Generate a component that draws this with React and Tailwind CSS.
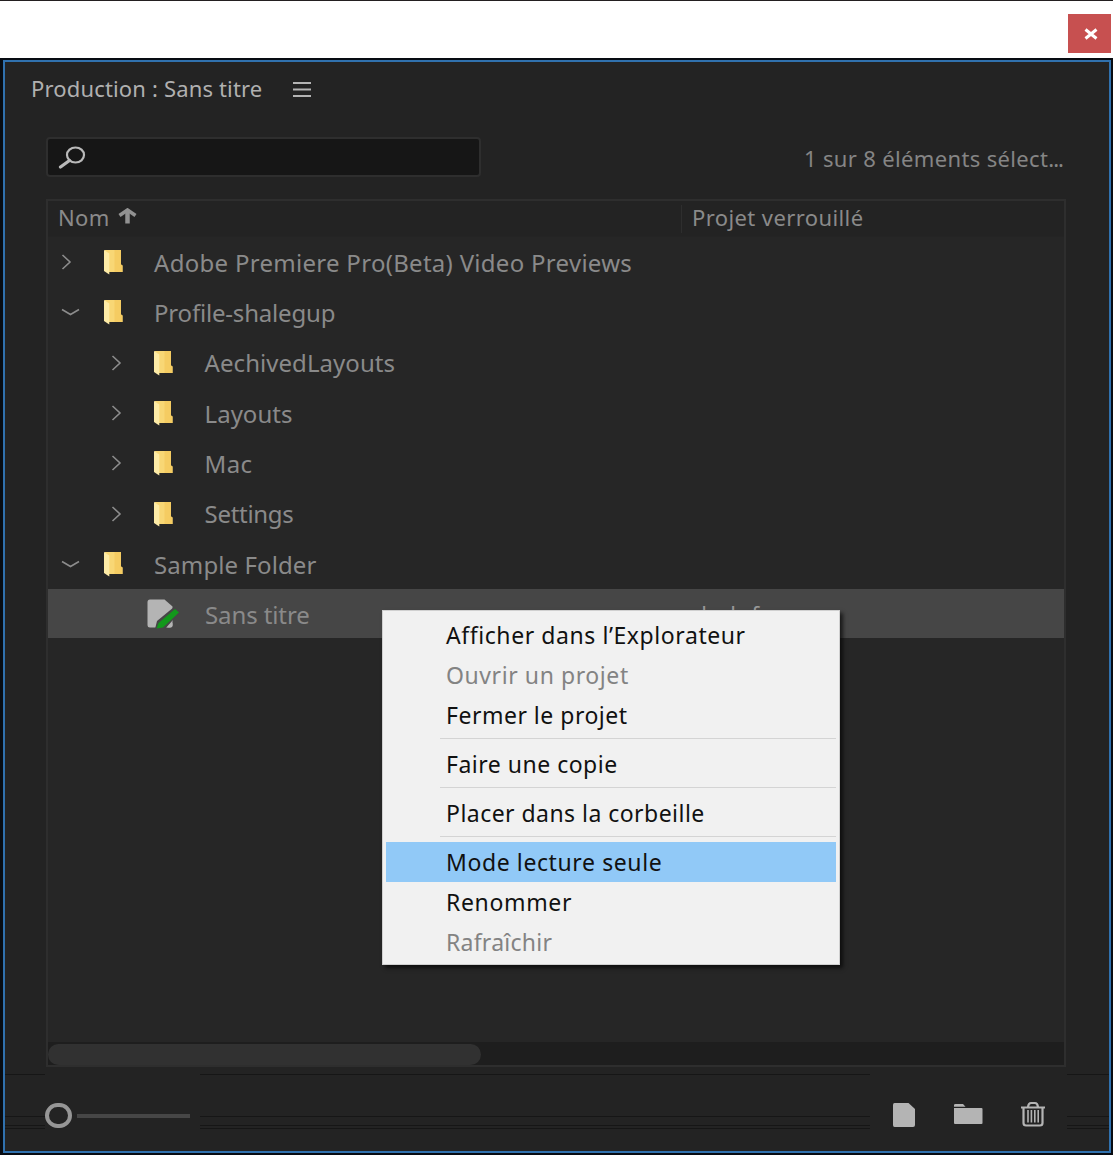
import React from 'react';

const rows = [
  { name: 'Adobe Premiere Pro(Beta) Video Previews', depth: 0, open: false, tracking: 'tracking-[0.29px]' },
  { name: 'Profile-shalegup', depth: 0, open: true, tracking: 'tracking-[-0.19px]' },
  { name: 'AechivedLayouts', depth: 1, open: false, tracking: 'tracking-[0.05px]' },
  { name: 'Layouts', depth: 1, open: false, tracking: 'tracking-[0px]' },
  { name: 'Mac', depth: 1, open: false, tracking: 'tracking-[0.3px]' },
  { name: 'Settings', depth: 1, open: false, tracking: 'tracking-[-0.3px]' },
  { name: 'Sample Folder', depth: 0, open: true, tracking: 'tracking-[0.1px]' }
];

const menuGroups = [
  [
    { label: 'Afficher dans l’Explorateur', tracking: 'tracking-[0.57px]' },
    { label: 'Ouvrir un projet', disabled: true, tracking: 'tracking-[0.58px]' },
    { label: 'Fermer le projet', tracking: 'tracking-[0.5px]' }
  ],
  [{ label: 'Faire une copie', tracking: 'tracking-[0.5px]' }],
  [{ label: 'Placer dans la corbeille', tracking: 'tracking-[0.46px]' }],
  [
    { label: 'Mode lecture seule', active: true, tracking: 'tracking-[0.6px]' },
    { label: 'Renommer', tracking: 'tracking-[0.65px]' },
    { label: 'Rafraîchir', disabled: true, tracking: 'tracking-[0.25px]' }
  ]
];

const Chevron = ({ open }) => (
  <svg width="20" height="20" viewBox="0 0 20 20" fill="none" stroke="#8c8c8c" strokeWidth="1.6" className="shrink-0">
    {open ? <path d="M1 7.5 L9.5 12.5 L18 7.5" /> : <path d="M1.5 3 L9 10 L1.5 17" />}
  </svg>
);

const FolderIcon = () => (
  <svg width="20" height="26" viewBox="0 0 20 26" className="shrink-0">
    <path d="M1.5 1 H18 V15.5 L19.5 16.5 V23 H5.5 Z" fill="#f8d775" />
    <path d="M11.5 1 H18 V15.5 L19.5 16.5 V23 H11.5 Z" fill="#f5cc62" />
    <path d="M1 1 L6.3 4.5 V25.5 L1 22 Z" fill="#fdeba6" />
  </svg>
);

const ProjectIcon = () => (
  <svg width="34" height="32" viewBox="0 0 34 32" className="shrink-0">
    <path d="M4 1.5 H18.5 L26.5 8.5 V27 Q26.5 29.5 24 29.5 H4 Q1.5 29.5 1.5 27 V4 Q1.5 1.5 4 1.5 Z" fill="#b4b4b4" />
    <path d="M9 31 L11 23 L28 9 L34 14 L19 31 Z" fill="#464646" />
    <path d="M10.5 30.5 L12.5 25 L29 11 L33 14.5 L17 29.5 Z" fill="#12981b" />
    <path d="M21 29.5 L26.5 25 V27 Q26.5 29.5 24 29.5 Z" fill="#b4b4b4" />
  </svg>
);

const FooterLines = ({ className }) => (
  <div className={`flex h-[55px] flex-col justify-between ${className}`}>
    <div className="h-px bg-[#161616]" />
    <div className="flex h-[13px] flex-col justify-between">
      <div className="h-px bg-[#161616]" />
      <div className="mt-[5px] h-px bg-[#161616]" />
      <div className="h-px bg-[#161616]" />
    </div>
  </div>
);

const TreeRow = ({ row }) => (
  <div className={`flex h-[50.3px] items-center ${row.depth ? 'pl-[63px]' : 'pl-[13px]'}`}>
    <Chevron open={row.open} />
    <div className="ml-[22px]">
      <FolderIcon />
    </div>
    <span className={`whitespace-nowrap pt-[0.4px] ${row.depth ? 'ml-[31.6px]' : 'ml-[31px]'} ${row.tracking}`}>{row.name}</span>
  </div>
);

const ContextMenu = () => (
  <div className="absolute left-[382px] top-[610px] h-[355px] w-[458px] border border-[#d0d0d0] bg-[#f1f1f1] px-[3px] pt-[4px] text-[23px] leading-[40px] text-[#111] shadow-[3px_3px_4px_rgba(0,0,0,0.65)]">
    {menuGroups.map((group, idx) => (
      <div key={idx}>
        {idx > 0 && <div className="ml-[54px] flex h-[9px] flex-col pt-[3px]"><div className="h-px bg-[#d4d4d4]" /></div>}
        {group.map(item => (
          <div
            key={item.label}
            className={`h-[40px] whitespace-nowrap pl-[60px] ${item.tracking} ${item.active ? 'bg-[#91c9f7]' : ''} ${item.disabled ? 'text-[#838383]' : ''}`}
          >
            {item.label}
          </div>
        ))}
      </div>
    ))}
  </div>
);

const App = () => (
  <div className="relative flex h-[1155px] w-[1113px] flex-col overflow-hidden bg-[#080c12] font-['Noto_Sans',sans-serif] text-[#8a8a8a]">
    <div className="flex h-[58px] shrink-0 justify-end border-t border-[#231f20] bg-white pr-[2px] pt-[13px]">
      <button className="flex h-[39px] w-[43px] items-center justify-center bg-[#c75050] pl-[2px]">
        <svg width="14" height="12" viewBox="0 0 14 12" stroke="#fff" strokeWidth="3">
          <path d="M1.5 1.5 L12.5 10.5 M12.5 1.5 L1.5 10.5" />
        </svg>
      </button>
    </div>

    <div className="ml-[3px] mt-[2px] flex h-[1093px] w-[1108px] flex-col border-2 border-[#3071ae] bg-[#232323]">
      <div className="flex h-[54px] items-center pl-[26px] text-[22px] text-[#b0b0b0]">
        <span className="-mt-[2px] w-[261px] whitespace-nowrap tracking-[0.16px]">Production : Sans titre</span>
        <svg width="20" height="16" viewBox="0 0 20 16" stroke="#b4b4b4" strokeWidth="1.8">
          <path d="M1 2 H19 M1 8.5 H19 M1 15 H19" />
        </svg>
      </div>

      <div className="mt-[21px] flex h-[40px] items-center justify-between pl-[41px] pr-[46px]">
        <div className="flex h-[40px] w-[435px] items-center rounded-[4px] border-2 border-[#2e2e2e] bg-[#161616] pl-[10px]">
          <svg width="28" height="24" viewBox="0 0 28 24" fill="none" stroke="#b9b9b9">
            <ellipse cx="17.5" cy="10" rx="8.5" ry="7.5" strokeWidth="2.2" />
            <path d="M11.5 15.5 L2.5 22" strokeWidth="3.2" strokeLinecap="round" />
          </svg>
        </div>
        <span className="mt-[3px] whitespace-nowrap text-[22px] tracking-[0.35px] text-[#858585]">
          1 sur 8 éléments sélect<span className="tracking-[-1px]">...</span>
        </span>
      </div>

      <div className="ml-[41px] mt-[22px] flex h-[868px] w-[1020px] flex-col border-2 border-[#2e2e2e] bg-[#262626]">
        <div className="flex h-[36px] shrink-0 items-center border-b border-[#242424] bg-[#232323] text-[22px]">
          <div className="-mt-[2px] flex w-[633px] items-center pl-[10px]">
            <span className="w-[60px] tracking-[0.3px]">Nom</span>
            <svg width="19" height="16" viewBox="0 0 19 16" fill="none" stroke="#929292" strokeWidth="4.5" className="-mt-[3px]">
              <path d="M9.5 2 V15.5" />
              <path d="M1.5 7.5 L9.5 2 L17.5 7.5" strokeWidth="3.6" />
            </svg>
          </div>
          <div className="flex h-[28px] items-center border-l border-[#2e2e2e] pl-[10px]">
            <span className="-mt-[2px] whitespace-nowrap tracking-[0.4px]">Projet verrouillé</span>
          </div>
        </div>

        <div className="text-[24px] leading-[49px]">
          {rows.map(row => (
            <TreeRow key={row.name} row={row} />
          ))}
          <div className="flex h-[49px] items-center bg-[#464646] pl-[98px]">
            <ProjectIcon />
            <span className="ml-[25px] w-[484px] whitespace-nowrap pt-[2px] tracking-[-0.1px]">Sans titre</span>
            <span className="whitespace-nowrap text-[22px] tracking-[1.6px] text-[#9a9a9a]">shalef</span>
          </div>
        </div>

        <div className="mt-auto flex h-[23px] items-end bg-[#1e1e1e]">
          <div className="h-[21px] w-[433px] rounded-full bg-[#313131]" />
        </div>
      </div>

      <div className="mt-[7px] flex">
        <FooterLines className="w-[40px]" />
        <div className="flex h-[55px] w-[155px] items-end pb-px">
          <div className="h-[25px] w-[27px] rounded-full border-[4px] border-[#969696]" />
          <div className="mb-[10px] ml-[5px] h-[4px] w-[113px] bg-[#464646]" />
        </div>
        <FooterLines className="w-[670px]" />
        <div className="flex h-[55px] w-[197px] items-end pb-px pl-[22px]">
          <svg width="24" height="26" viewBox="0 0 24 26" fill="#b4b4b4">
            <path d="M2.5 1 H16.5 L23 7 V23 Q23 25 21 25 H2.5 Q1 25 1 23 V3 Q1 1 2.5 1 Z" />
          </svg>
          <svg width="30" height="22" viewBox="0 0 30 22" fill="#b4b4b4" className="mb-[3px] ml-[37px]">
            <path d="M1 3.8 V2 Q1 1 2.5 1 H10 L12.5 3.8 Z" />
            <path d="M1 5 H28.5 Q29.5 5 29.5 6 V20 Q29.5 21 28.5 21 H2 Q1 21 1 20 Z" />
          </svg>
          <svg width="26" height="26" viewBox="0 0 26 26" fill="none" stroke="#b4b4b4" strokeWidth="2.2" className="mb-px ml-[37px]">
            <path d="M1 6.5 H25 M8 6 Q8.5 2 11 2 H15 Q17.5 2 18 6" />
            <path d="M3.5 7 V22 Q3.5 24.500 6 24.500 H20 Q22.500 24.500 22.500 22 V7" />
            <path d="M8 9 V21.500 M11.400 9 V21.500 M14.800 9 V21.500 M18.200 9 V21.500" strokeWidth="1.6" />
          </svg>
        </div>
        <FooterLines className="w-[42px]" />
      </div>
    </div>

    <ContextMenu />
  </div>
);

export default App;
